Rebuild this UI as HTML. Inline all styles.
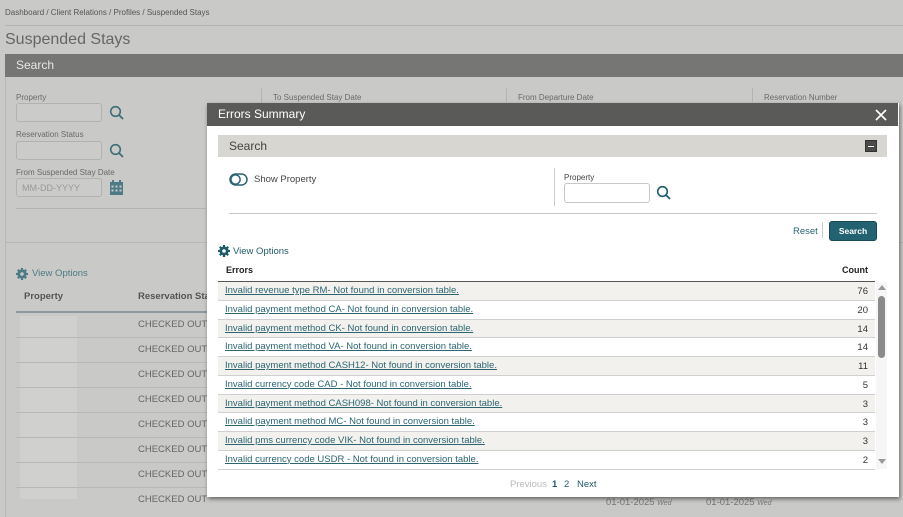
<!DOCTYPE html>
<html><head><meta charset="utf-8"><style>
*{box-sizing:border-box;margin:0;padding:0}
body{width:903px;height:517px;overflow:hidden;background:#c9c9c7;font-family:"Liberation Sans",sans-serif;position:relative;color:#333}
.a{position:absolute}
.lbl{font-size:8px;color:#6a6a6a}
.inp{border:1px solid #b2b2b0;border-radius:3px;background:#cbcbc9}
.link{color:#2c6571;text-decoration:underline;font-size:9.5px}
.row{position:absolute;left:218px;width:657px;height:18.75px;border-bottom:1px solid #d0d0d0}
.row span.c{position:absolute;right:7px;top:4px;font-size:9.5px;color:#333}
.row a{position:absolute;left:7px;top:3px}
.bg-row{position:absolute;left:16px;width:200px;height:25px;border-bottom:1px solid #b8b8b6}
.bg-row span{position:absolute;left:122px;top:6px;font-size:9.5px;color:#666}
</style></head><body>
<div class="a" style="left:5px;top:8px;font-size:8px;color:#555">Dashboard / Client Relations / Profiles / Suspended Stays</div>
<div class="a" style="left:5px;top:25px;width:898px;border-top:1px solid #b4b4b2"></div>
<div class="a" style="left:5px;top:31px;font-size:16px;color:#666">Suspended Stays</div>
<div class="a" style="left:5px;top:54px;width:898px;height:23px;background:#767674"></div>
<div class="a" style="left:16px;top:58px;font-size:12px;color:#e8e8e8">Search</div>
<div class="a" style="left:5px;top:77px;width:898px;height:166px;border-left:1px solid #b8b8b6;border-bottom:1px solid #b8b8b6"></div>
<div class="a" style="left:5px;top:243px;width:1px;height:274px;background:#b8b8b6"></div>
<div class="a lbl" style="left:16px;top:93px">Property</div>
<div class="a inp" style="left:16px;top:103px;width:86px;height:19px"></div>
<svg class="a" style="left:109px;top:105px" width="16" height="16"><circle cx="6.5" cy="6.5" r="4.8" fill="none" stroke="#3d6e78" stroke-width="1.6"/><line x1="10" y1="10" x2="14" y2="14" stroke="#3d6e78" stroke-width="1.8"/></svg>
<div class="a lbl" style="left:16px;top:130px">Reservation Status</div>
<div class="a inp" style="left:16px;top:141px;width:86px;height:19px"></div>
<svg class="a" style="left:109px;top:143px" width="16" height="16"><circle cx="6.5" cy="6.5" r="4.8" fill="none" stroke="#3d6e78" stroke-width="1.6"/><line x1="10" y1="10" x2="14" y2="14" stroke="#3d6e78" stroke-width="1.8"/></svg>
<div class="a lbl" style="left:16px;top:168px">From Suspended Stay Date</div>
<div class="a inp" style="left:16px;top:178px;width:86px;height:19px;font-size:9px;color:#999;padding:4px 5px">MM-DD-YYYY</div>
<svg class="a" style="left:109px;top:180px" width="15" height="16"><rect x="3" y="0" width="2" height="3" fill="#4d7a84"/><rect x="10" y="0" width="2" height="3" fill="#4d7a84"/><rect x="1" y="2" width="13" height="13" fill="#4d7a84"/><g fill="#c9c9c7"><rect x="2.5" y="5.5" width="2" height="2"/><rect x="6.5" y="5.5" width="2" height="2"/><rect x="10.5" y="5.5" width="2" height="2"/><rect x="2.5" y="9.5" width="2" height="2"/><rect x="6.5" y="9.5" width="2" height="2"/><rect x="10.5" y="9.5" width="2" height="2"/></g></svg>
<div class="a" style="left:16px;top:208px;width:190px;border-top:1px solid #b4b4b2"></div>
<div class="a" style="left:261px;top:88px;height:30px;border-left:1px solid #b4b4b2"></div>
<div class="a lbl" style="left:273px;top:93px">To Suspended Stay Date</div>
<div class="a" style="left:506px;top:88px;height:14px;border-left:1px solid #b4b4b2"></div>
<div class="a lbl" style="left:518px;top:93px">From Departure Date</div>
<div class="a" style="left:752px;top:88px;height:14px;border-left:1px solid #b4b4b2"></div>
<div class="a lbl" style="left:764px;top:93px">Reservation Number</div>
<svg class="a" style="left:16px;top:268px" width="12" height="12"><g stroke="#4d7a84" stroke-width="2.2"><line x1="6" y1="0" x2="6" y2="12"/><line x1="0" y1="6" x2="12" y2="6"/><line x1="1.8" y1="1.8" x2="10.2" y2="10.2"/><line x1="10.2" y1="1.8" x2="1.8" y2="10.2"/></g><circle cx="6" cy="6" r="4.5" fill="#4d7a84"/><circle cx="6" cy="6" r="1.8" fill="#c9c9c7"/></svg>
<div class="a" style="left:32px;top:268px;font-size:9.5px;color:#4d7a84">View Options</div>
<div class="a" style="left:24px;top:291px;font-size:9.5px;font-weight:bold;color:#555">Property</div>
<div class="a" style="left:138px;top:291px;font-size:9.5px;font-weight:bold;color:#555">Reservation Sta</div>
<div class="a" style="left:16px;top:311px;width:200px;border-top:2px solid #8a9a9e"></div>
<div class="a" style="left:20px;top:316px;width:57px;height:183px;background:#d0d0ce"></div>
<div class="bg-row" style="top:313px"><span>CHECKED OUT</span></div>
<div class="bg-row" style="top:338px"><span>CHECKED OUT</span></div>
<div class="bg-row" style="top:363px"><span>CHECKED OUT</span></div>
<div class="bg-row" style="top:388px"><span>CHECKED OUT</span></div>
<div class="bg-row" style="top:413px"><span>CHECKED OUT</span></div>
<div class="bg-row" style="top:438px"><span>CHECKED OUT</span></div>
<div class="bg-row" style="top:463px"><span>CHECKED OUT</span></div>
<div class="bg-row" style="top:488px;border:none"><span>CHECKED OUT</span></div>
<div class="a" style="left:606px;top:497px;font-size:9.5px;color:#777">01-01-2025 <i style="font-size:7px">Wed</i></div>
<div class="a" style="left:706px;top:497px;font-size:9.5px;color:#777">01-01-2025 <i style="font-size:7px">Wed</i></div>

<!-- dialog -->
<div class="a" style="left:207px;top:103px;width:692px;height:394px;background:#fff;box-shadow:1px 2px 4px rgba(0,0,0,.5)"></div>
<div class="a" style="left:207px;top:103px;width:691px;height:23px;background:#5a5a58"></div>
<div class="a" style="left:218px;top:107px;font-size:12px;color:#fff">Errors Summary</div>
<svg class="a" style="left:875px;top:109px" width="12" height="12"><path d="M1 1L11 11M11 1L1 11" stroke="#fff" stroke-width="1.6"/></svg>
<div class="a" style="left:218px;top:135px;width:669px;height:22px;background:#d7d6d1"></div>
<div class="a" style="left:229px;top:139px;font-size:12px;color:#444">Search</div>
<div class="a" style="left:865px;top:140px;width:12px;height:12px;background:#4a4a48;border:1px solid #333"><div style="position:absolute;left:2px;top:4.5px;width:6px;height:1.5px;background:#fff"></div></div>
<svg class="a" style="left:229px;top:173px" width="19" height="13"><rect x="1" y="1" width="17" height="11" rx="5.5" fill="none" stroke="#2c6571" stroke-width="1.5"/><circle cx="6.5" cy="6.5" r="4.6" fill="#fff" stroke="#2c6571" stroke-width="1.5"/></svg>
<div class="a" style="left:254px;top:174px;font-size:9.5px;color:#444">Show Property</div>
<div class="a" style="left:554px;top:168px;height:38px;border-left:1px solid #ccc"></div>
<div class="a" style="left:564px;top:173px;font-size:8px;color:#444">Property</div>
<div class="a" style="left:564px;top:183px;width:86px;height:20px;border:1px solid #c8c8c8;border-radius:3px"></div>
<svg class="a" style="left:656px;top:185px" width="16" height="16"><circle cx="6.5" cy="6.5" r="4.8" fill="none" stroke="#1d5c68" stroke-width="1.6"/><line x1="10" y1="10" x2="14" y2="14" stroke="#1d5c68" stroke-width="1.8"/></svg>
<div class="a" style="left:229px;top:213px;width:648px;border-top:1px solid #c8c8c8"></div>
<div class="a" style="left:793px;top:226px;font-size:9.5px;color:#2c6571">Reset</div>
<div class="a" style="left:822px;top:222px;height:16px;border-left:1px solid #ccc"></div>
<div class="a" style="left:829px;top:221px;width:48px;height:20px;background:#236371;border:1px solid #174a55;border-radius:3px;color:#fff;font-size:8.5px;font-weight:bold;text-align:center;line-height:18px">Search</div>
<svg class="a" style="left:218px;top:245px" width="12" height="12"><g stroke="#1d5c68" stroke-width="2.2"><line x1="6" y1="0" x2="6" y2="12"/><line x1="0" y1="6" x2="12" y2="6"/><line x1="1.8" y1="1.8" x2="10.2" y2="10.2"/><line x1="10.2" y1="1.8" x2="1.8" y2="10.2"/></g><circle cx="6" cy="6" r="4.5" fill="#1d5c68"/><circle cx="6" cy="6" r="1.8" fill="#fff"/></svg>
<div class="a" style="left:233px;top:246px;font-size:9.5px;color:#1d5c68">View Options</div>
<div class="a" style="left:226px;top:265px;font-size:9px;font-weight:bold;color:#222">Errors</div>
<div class="a" style="left:842px;top:265px;font-size:9px;font-weight:bold;color:#222">Count</div>
<div class="a" style="left:218px;top:281px;width:657px;border-top:1.5px solid #555"></div>
<div class="row" style="top:282px;background:#f2f1ee"><a class="link">Invalid revenue type RM- Not found in conversion table.</a><span class="c">76</span></div>
<div class="row" style="top:300.75px"><a class="link">Invalid payment method CA- Not found in conversion table.</a><span class="c">20</span></div>
<div class="row" style="top:319.5px;background:#f2f1ee"><a class="link">Invalid payment method CK- Not found in conversion table.</a><span class="c">14</span></div>
<div class="row" style="top:338.25px"><a class="link">Invalid payment method VA- Not found in conversion table.</a><span class="c">14</span></div>
<div class="row" style="top:357px;background:#f2f1ee"><a class="link">Invalid payment method CASH12- Not found in conversion table.</a><span class="c">11</span></div>
<div class="row" style="top:375.75px"><a class="link">Invalid currency code CAD - Not found in conversion table.</a><span class="c">5</span></div>
<div class="row" style="top:394.5px;background:#f2f1ee"><a class="link">Invalid payment method CASH098- Not found in conversion table.</a><span class="c">3</span></div>
<div class="row" style="top:413.25px"><a class="link">Invalid payment method MC- Not found in conversion table.</a><span class="c">3</span></div>
<div class="row" style="top:432px;background:#f2f1ee"><a class="link">Invalid pms currency code VIK- Not found in conversion table.</a><span class="c">3</span></div>
<div class="row" style="top:450.75px"><a class="link">Invalid currency code USDR - Not found in conversion table.</a><span class="c">2</span></div>
<div class="a" style="left:876px;top:282px;width:11px;height:187px;background:#f6f6f6"></div>
<svg class="a" style="left:878px;top:284px" width="8" height="6"><path d="M0 6L4 1L8 6Z" fill="#999"/></svg>
<div class="a" style="left:878px;top:296px;width:7px;height:62px;background:#8a8a8a;border-radius:4px"></div>
<svg class="a" style="left:878px;top:459px" width="8" height="6"><path d="M0 0L4 5L8 0Z" fill="#999"/></svg>
<div class="a" style="left:510px;top:479px;font-size:9.5px;color:#bbb">Previous</div>
<div class="a" style="left:552px;top:479px;font-size:9.5px;font-weight:bold;color:#1d5c68">1</div>
<div class="a" style="left:564px;top:479px;font-size:9.5px;color:#1d5c68">2</div>
<div class="a" style="left:577px;top:479px;font-size:9.5px;color:#1d5c68">Next</div>
</body></html>
